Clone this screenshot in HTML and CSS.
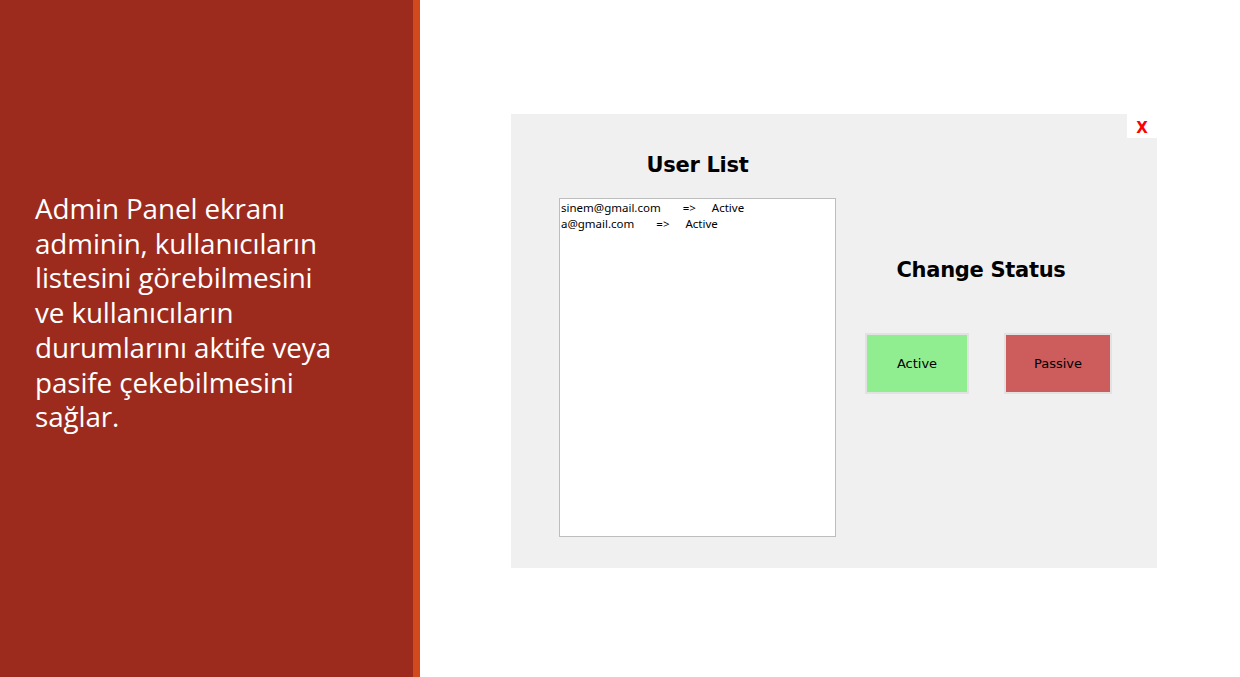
FILE: index.html
```html
<!DOCTYPE html>
<html lang="tr">
<head>
<meta charset="utf-8">
<title>Admin Panel</title>
<link rel="stylesheet" href="styles.css">
</head>
<body>
<div class="slide">
  <aside class="side">
    <p class="side-text">Admin Panel ekranı adminin, kullanıcıların listesini görebilmesini ve kullanıcıların durumlarını aktife veya pasife çekebilmesini sağlar.</p>
  </aside>
  <main class="stage">
    <div class="window">
      <button class="close">X</button>
      <section class="list-col">
        <h2 class="title">User List</h2>
        <div class="listbox">
          <div class="row"><span class="email">sinem@gmail.com</span><span class="arrow">=&gt;</span><span>Active</span></div>
          <div class="row"><span class="email">a@gmail.com</span><span class="arrow">=&gt;</span><span>Active</span></div>
        </div>
      </section>
      <section class="status-col">
        <h2 class="title status-title">Change Status</h2>
        <div class="buttons">
          <button class="btn btn-active">Active</button>
          <button class="btn btn-passive">Passive</button>
        </div>
      </section>
    </div>
  </main>
</div>
</body>
</html>
```

FILE: styles.css
```css
html, body {
  margin: 0;
  padding: 0;
  height: 100%;
  background: #ffffff;
}
.slide {
  display: flex;
  width: 1240px;
  height: 677px;
  overflow: hidden;
}
.side {
  width: 413px;
  flex: none;
  background: #9c2b1e;
  border-right: 7px solid #d24a1c;
  box-sizing: content-box;
}
.side-text {
  margin: 191px 0 0 35px;
  width: 308px;
  font-family: "Open Sans", "Liberation Sans", sans-serif;
  font-size: 27.8px;
  line-height: 34.7px;
  color: #ffffff;
  letter-spacing: -0.1px;
}
.stage {
  flex: 1;
  padding: 114px 0 0 91px;
}
.window {
  position: relative;
  width: 646px;
  height: 454px;
  background: #f0f0f0;
  display: flex;
  box-sizing: border-box;
  padding-left: 48px;
}
.close {
  position: absolute;
  top: 0;
  right: 0;
  width: 30px;
  height: 24px;
  border: none;
  background: #ffffff;
  color: #ff0000;
  font-family: "DejaVu Sans", sans-serif;
  font-weight: bold;
  font-size: 15px;
  padding: 3px 0 0 0;
  line-height: 16px;
}
.title {
  margin: 0;
  font-family: "DejaVu Sans", sans-serif;
  font-weight: bold;
  font-size: 21px;
  color: #000;
  text-align: center;
  letter-spacing: -0.3px;
}
.list-col {
  width: 277px;
  padding-top: 37px;
  display: flex;
  flex-direction: column;
}
.list-col .title {
  height: 47px;
  line-height: 28px;
}
.listbox {
  width: 277px;
  height: 339px;
  box-sizing: border-box;
  background: #ffffff;
  border: 1px solid #bdbdbd;
  padding: 1px 0 0 1px;
  font-family: "Noto Sans", "Open Sans", sans-serif;
  font-size: 11.5px;
  line-height: 16px;
  color: #000;
}
.row {
  display: flex;
}
.email {
  margin-right: 22px;
}
.arrow {
  margin-right: 16px;
}
.status-col {
  margin-left: 29px;
  width: 247px;
  padding-top: 142px;
}
.status-title {
  width: 232px;
  margin-left: 0;
  line-height: 28px;
  height: 77px;
}
.buttons {
  display: flex;
  gap: 35px;
}
.btn {
  height: 61px;
  border: 2px solid #e2e2e2;
  font-family: "DejaVu Sans", sans-serif;
  font-size: 13px;
  color: #000;
  padding: 0;
}
.btn-active {
  width: 104px;
  background: #90ee90;
}
.btn-passive {
  width: 108px;
  background: #cd5c5c;
}
```
